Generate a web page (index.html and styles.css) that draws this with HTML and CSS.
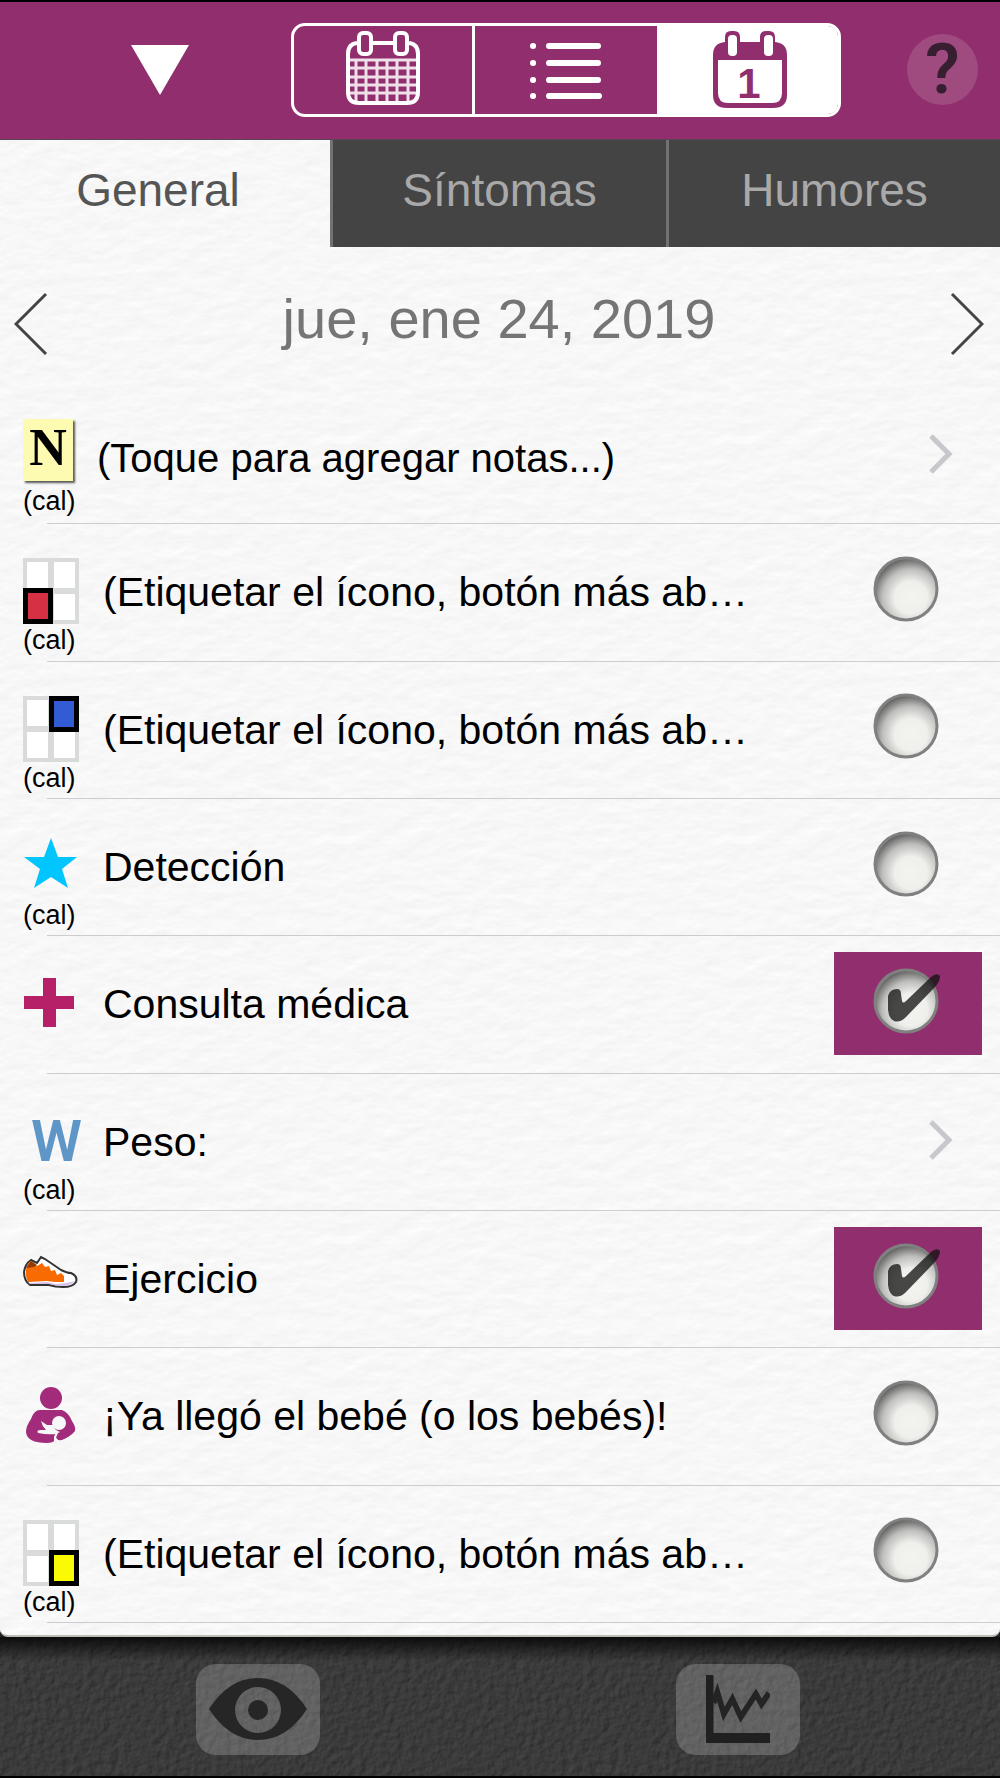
FILE: index.html
```html
<!DOCTYPE html>
<html lang="es">
<head>
<meta charset="utf-8">
<meta name="viewport" content="width=device-width, initial-scale=1">
<title>jue, ene 24, 2019</title>
<link rel="stylesheet" href="styles.css">
</head>
<body>
<header class="topbar">
  <button class="topbar-menu" type="button" aria-label="Menú">
    <svg width="58" height="50" viewBox="0 0 58 50"><path d="M0 0H58L29 50Z" fill="#fff"/></svg>
  </button>
  <div class="segments">
    <button class="segment segment-first" type="button" aria-label="Mes">
      <svg width="76" height="78" viewBox="0 0 76 78" fill="none" stroke="#fff">
        <path d="M12 12Q3 13 3 23V61Q3 72 14 72H62Q73 72 73 61V23Q73 13 64 12M27 12H49" stroke-width="4"/>
        <rect x="14" y="2" width="12" height="21" rx="4" stroke-width="4"/>
        <rect x="50" y="2" width="12" height="21" rx="4" stroke-width="4"/>
        <path d="M4 29H72M4 37H72M4 46H72M4 54H72M4 62H72M11 29V70M21 29V71M32 29V71M42 29V71M52 29V71M63 29V71" stroke-width="3" stroke-opacity=".85"/>
      </svg>
    </button>
    <button class="segment" type="button" aria-label="Lista">
      <svg width="74" height="78" viewBox="0 0 74 78" fill="none" stroke="#fff" stroke-width="6" stroke-linecap="round">
        <path d="M4 15H4.1M4 32H4.1M4 49H4.1M4 65H4.1M20 15H69M20 32H69M20 49H69M20 65H70"/>
      </svg>
    </button>
    <button class="segment segment-on" type="button" aria-label="Día" aria-pressed="true">
      <svg width="76" height="78" viewBox="0 0 76 78">
        <path d="M1 24Q1 12 13 11V6Q13 0 19 0H22Q28 0 28 6V11H48V6Q48 0 54 0H57Q63 0 63 6V11Q75 12 75 24V64Q75 77 61 77H15Q1 77 1 64Z" fill="#912f6e"/>
        <path d="M6 29H70V62Q70 72 60 72H16Q6 72 6 62Z" fill="#fff"/>
        <rect x="16" y="4" width="9" height="21" rx="4" fill="#fff"/>
        <rect x="52" y="4" width="9" height="21" rx="4" fill="#fff"/>
        <text x="37" y="67" text-anchor="middle" class="day-number">1</text>
      </svg>
    </button>
  </div>
  <button class="help" type="button">?</button>
</header>

<main class="paper">
  <nav class="tabs">
    <button class="tab tab-on" type="button">General</button>
    <button class="tab" type="button">Síntomas</button>
    <button class="tab" type="button">Humores</button>
  </nav>

  <div class="date">
    <button class="date-arrow" type="button" aria-label="Día anterior">
      <svg width="34" height="64" viewBox="0 0 34 64"><path d="M32 2L2 32L32 62" fill="none" stroke="#444" stroke-width="3"/></svg>
    </button>
    <h1 class="date-text">jue, ene 24, 2019</h1>
    <button class="date-arrow" type="button" aria-label="Día siguiente">
      <svg width="34" height="64" viewBox="0 0 34 64"><path d="M2 2L32 32L2 62" fill="none" stroke="#444" stroke-width="3"/></svg>
    </button>
  </div>

  <ul class="rows">
    <li class="row row-note">
      <div class="mark"><span class="icon"><span class="note">N</span></span><span class="cal">(cal)</span></div>
      <a class="row-text" href="#notas">(Toque para agregar notas...)</a>
      <svg class="chevron" width="26" height="42" viewBox="0 0 26 42"><path d="M3 3L21 21L3 39" fill="none" stroke="#c7c7cc" stroke-width="5"/></svg>
    </li>
    <li class="row">
      <div class="mark">
        <svg class="icon" viewBox="0 0 56 66"><rect width="56" height="66" fill="#d9dbda"/><path d="M4 4H25V30H4ZM31 4H52V30H31ZM31 36H52V62H31Z" fill="#fff"/><rect y="30" width="30" height="36"/><rect x="5" y="35" width="20" height="26" fill="#d53043"/></svg>
        <span class="cal">(cal)</span>
      </div>
      <label class="row-text" for="c1">(Etiquetar el ícono, botón más ab…</label>
      <input class="check" type="checkbox" id="c1">
    </li>
    <li class="row">
      <div class="mark">
        <svg class="icon" viewBox="0 0 56 66"><rect width="56" height="66" fill="#d9dbda"/><path d="M4 4H25V30H4ZM4 36H25V62H4ZM31 36H52V62H31Z" fill="#fff"/><rect x="26" width="30" height="36"/><rect x="31" y="5" width="20" height="26" fill="#335bd3"/></svg>
        <span class="cal">(cal)</span>
      </div>
      <label class="row-text" for="c2">(Etiquetar el ícono, botón más ab…</label>
      <input class="check" type="checkbox" id="c2">
    </li>
    <li class="row">
      <div class="mark">
        <svg class="icon" viewBox="0 0 56 66"><path d="M28 5L35 24H54L39 36L45 55L28 44L11 55L17 36L1 24H21Z" fill="#00c5ff"/></svg>
        <span class="cal">(cal)</span>
      </div>
      <label class="row-text" for="c3">Detección</label>
      <input class="check" type="checkbox" id="c3">
    </li>
    <li class="row">
      <div class="mark">
        <svg class="icon" viewBox="0 0 56 66"><path d="M20 8H33V26H51V39H33V57H20V39H1V26H20Z" fill="#b52069"/></svg>
      </div>
      <label class="row-text" for="c4">Consulta médica</label>
      <input class="check" type="checkbox" id="c4" checked>
    </li>
    <li class="row">
      <div class="mark"><span class="icon"><span class="weight">W</span></span><span class="cal">(cal)</span></div>
      <a class="row-text" href="#peso">Peso:</a>
      <svg class="chevron" width="26" height="42" viewBox="0 0 26 42"><path d="M3 3L21 21L3 39" fill="none" stroke="#c7c7cc" stroke-width="5"/></svg>
    </li>
    <li class="row">
      <div class="mark">
        <svg class="icon" viewBox="0 0 56 66">
          <path d="M1 27Q2 19 8 15L14 18L18 12L22 14L38 25Q44 28 48 28Q55 31 53 37Q50 42 40 42Q32 42 26 40L7 40Q1 36 1 27Z" fill="#fff" stroke="#333" stroke-width="2"/>
          <path d="M3 25Q4 18 8 16L14 21L19 18L22 22L26 21L28 26L32 25L34 30L38 28L41 31V37H32L24 36L5 37Q2 31 3 25Z" fill="#f76b00"/>
          <path d="M5 38L24 37L33 39L43 38L52 36Q49 40 41 41Q33 41 26 39L8 39Z" fill="#d5c2e8"/>
          <path d="M3 23L8 16L14 20L11 22Z" fill="#913b08"/>
        </svg>
      </div>
      <label class="row-text" for="c6">Ejercicio</label>
      <input class="check" type="checkbox" id="c6" checked>
    </li>
    <li class="row">
      <div class="mark">
        <svg class="icon" viewBox="0 0 56 66">
          <circle cx="28" cy="16" r="11" fill="#a22c7b"/>
          <path d="M17 28H39Q46 31 49 39Q53 45 52 49Q47 55 39 58Q33 59 33 54Q34 61 24 61Q4 61 3 50Q3 44 8 37Q11 28 17 28Z" fill="#a22c7b"/>
          <circle cx="36" cy="41" r="7" fill="#f7f7f7"/>
          <path d="M18 39L24 43H30Q31 48 37 50L33 52Q25 53 15 51Q13 48 18 48L23 48Q19 44 18 39Z" fill="#f7f7f7"/>
          <path d="M34 51L32 55V59" fill="none" stroke="#f7f7f7" stroke-width="2"/>
        </svg>
      </div>
      <label class="row-text" for="c7">¡Ya llegó el bebé (o los bebés)!</label>
      <input class="check" type="checkbox" id="c7">
    </li>
    <li class="row">
      <div class="mark">
        <svg class="icon" viewBox="0 0 56 66"><rect width="56" height="66" fill="#d9dbda"/><path d="M4 4H25V30H4ZM31 4H52V30H31ZM4 36H25V62H4Z" fill="#fff"/><rect x="26" y="30" width="30" height="36"/><rect x="31" y="35" width="20" height="26" fill="#fafa05"/></svg>
        <span class="cal">(cal)</span>
      </div>
      <label class="row-text" for="c8">(Etiquetar el ícono, botón más ab…</label>
      <input class="check" type="checkbox" id="c8">
    </li>
  </ul>
</main>

<footer class="toolbar">
  <button class="tool" type="button" aria-label="Ver">
    <svg width="98" height="62" viewBox="0 0 98 62">
      <path fill-rule="evenodd" d="M0 31Q20 0 49 0Q78 0 98 31Q78 62 49 62Q20 62 0 31ZM49 9A23 23 0 1 0 49 55A23 23 0 1 0 49 9Z" fill="#262626"/>
      <circle cx="49" cy="32" r="10" fill="#262626"/>
    </svg>
  </button>
  <button class="tool" type="button" aria-label="Gráfica">
    <svg width="64" height="68" viewBox="0 0 68 68" preserveAspectRatio="none">
      <path d="M0 0H8V58H68V68H0Z" fill="#202020"/>
      <path d="M8 28L12 17L19 39L28 24L37 42L53 19L59 29L67 18" fill="none" stroke="#242424" stroke-width="6"/>
    </svg>
  </button>
</footer>
</body>
</html>
```

FILE: styles.css
```css
* {
  box-sizing: border-box;
}

body {
  margin: 0;
  min-height: 100vh;
  display: flex;
  flex-direction: column;
  font-family: "Liberation Sans", Arial, sans-serif;
  background: #222;
  border-top: 2px solid #000;
  border-bottom: 2px solid #000;
}

button {
  margin: 0;
  padding: 0;
  border: 0;
  background: none;
  font-family: inherit;
  display: flex;
  align-items: center;
  justify-content: center;
}

svg {
  display: block;
}

/* top bar */
.topbar {
  height: 138px;
  padding-bottom: 2px;
  display: grid;
  grid-template-columns: 291px 1fr 159px;
  align-items: center;
  background: #912f6e;
  border-bottom: 1px solid #5c4455;
}

.topbar-menu {
  justify-self: end;
  margin-right: 102px;
}

.segments {
  height: 94px;
  display: grid;
  grid-template-columns: repeat(3, 1fr);
  border: 3px solid #fff;
  border-radius: 14px;
}

.segment-first {
  border-right: 3px solid #fff;
}

.segment-on {
  padding-left: 6px;
  background: #fff;
  border-radius: 0 10px 10px 0;
}

.day-number {
  font-size: 42px;
  font-weight: 700;
  fill: #912f6e;
}

.help {
  width: 71px;
  height: 71px;
  justify-self: end;
  margin-right: 22px;
  border-radius: 50%;
  background: #9f4b80;
  color: #371f31;
  font-family: Roboto, sans-serif;
  font-size: 70px;
  font-weight: 600;
  line-height: 71px;
}

/* paper sheet */
.paper {
  flex: 1;
  display: flex;
  flex-direction: column;
  padding-bottom: 12px;
  border-bottom: 2px solid #bdbdb8;
  border-radius: 0 0 8px 8px;
  background: #f7f7f7 url("data:image/svg+xml,%3Csvg xmlns='http://www.w3.org/2000/svg' width='400' height='400'%3E%3Cfilter id='p' x='0' y='0' width='100%25' height='100%25' color-interpolation-filters='sRGB'%3E%3CfeTurbulence type='fractalNoise' baseFrequency='.04 .07' numOctaves='3' seed='4' stitchTiles='stitch'/%3E%3CfeDiffuseLighting surfaceScale='.2' diffuseConstant='1.12' lighting-color='white'%3E%3CfeDistantLight azimuth='250' elevation='60'/%3E%3C/feDiffuseLighting%3E%3C/filter%3E%3Crect width='400' height='400' filter='url(%23p)'/%3E%3C/svg%3E");
}

.tabs {
  height: 107px;
  display: grid;
  grid-template-columns: 330fr 336fr 334fr;
}

.tab {
  padding-bottom: 8px;
  border-left: 3px solid #6f7375;
  background: #444;
  color: #a9a9a9;
  font-size: 46px;
}

.tab-on {
  padding-right: 14px;
  border-left: 0;
  background: none;
  color: #555;
}

.date {
  height: 140px;
  padding: 14px 16px 0 14px;
  display: flex;
  align-items: center;
  justify-content: space-between;
}

.date-text {
  margin: 0;
  padding-bottom: 12px;
  color: #757575;
  font-size: 56px;
  font-weight: 400;
}

/* list */
.rows {
  flex: 1;
  margin: 0;
  padding: 0;
  list-style: none;
  display: grid;
  grid-auto-rows: 1fr;
}

.row {
  display: flex;
  align-items: center;
  gap: 24px;
  padding: 0 18px 0 23px;
  background: linear-gradient(#cdcdd0, #cdcdd0) 47px 100% / 100% 1px no-repeat;
}

.row-note {
  gap: 18px;
}

.mark {
  width: 56px;
  align-self: stretch;
  padding-top: 34px;
}

.icon {
  display: block;
  width: 56px;
  height: 66px;
}

.cal {
  display: block;
  padding-top: 2px;
  font-size: 27px;
  line-height: 28px;
}

.note {
  display: block;
  width: 50px;
  height: 62px;
  background: #fdfab2;
  box-shadow: 2px 2px 2px #555;
  font-family: "Liberation Serif", serif;
  font-size: 52px;
  font-weight: 700;
  line-height: 58px;
  text-align: center;
}

.weight {
  display: block;
  padding-left: 8px;
  color: #5e97c7;
  font-family: Roboto, sans-serif;
  font-size: 58px;
  font-weight: 600;
  line-height: 66px;
}

.row-text {
  flex: 1;
  color: #000;
  font-size: 41px;
  text-decoration: none;
  white-space: nowrap;
}

.row-note .row-text {
  padding-top: 6px;
  font-size: 40px;
}

.row-note .mark {
  padding-top: 32px;
}

.chevron {
  margin: 0 28px 4px 0;
}

.check {
  appearance: none;
  flex: none;
  width: 148px;
  height: 103px;
  margin: 0 0 3px;
  background: url("data:image/svg+xml,%3Csvg xmlns='http://www.w3.org/2000/svg' width='66' height='66'%3E%3CradialGradient id='g' cx='.58' cy='.64' r='.66'%3E%3Cstop offset='0' stop-color='%23f3f3f0'/%3E%3Cstop offset='.4' stop-color='%23efefec'/%3E%3Cstop offset='.7' stop-color='%23bdbdbb'/%3E%3Cstop offset='1' stop-color='%23555'/%3E%3C/radialGradient%3E%3Ccircle cx='33' cy='33' r='31' fill='url(%23g)' stroke='%23808080' stroke-width='3'/%3E%3C/svg%3E") 39px 16px no-repeat;
}

.check:checked {
  background-color: #912f6e;
  background-image: url("data:image/svg+xml,%3Csvg xmlns='http://www.w3.org/2000/svg' width='68' height='66'%3E%3CradialGradient id='g' cx='.58' cy='.64' r='.66'%3E%3Cstop offset='0' stop-color='%23f3f3f0'/%3E%3Cstop offset='.4' stop-color='%23efefec'/%3E%3Cstop offset='.7' stop-color='%23bdbdbb'/%3E%3Cstop offset='1' stop-color='%23555'/%3E%3C/radialGradient%3E%3Ccircle cx='33' cy='33' r='31' fill='url(%23g)' stroke='%23808080' stroke-width='3'/%3E%3Cpath d='M15 28Q17 21 24 21Q28 21 28 26L29 33Q30 36 33 33L58 9Q64 4 67 8Q67 14 61 20L33 49Q27 55 21 53Q16 51 15 42Z' fill='%23111' fill-opacity='.76'/%3E%3C/svg%3E");
}

/* bottom bar */
.toolbar {
  height: 139px;
  padding: 5px 22px 0 18px;
  display: flex;
  align-items: center;
  justify-content: space-around;
  background:
    linear-gradient(rgba(0, 0, 0, .8), rgba(0, 0, 0, 0) 24px),
    url("data:image/svg+xml,%3Csvg xmlns='http://www.w3.org/2000/svg' width='500' height='140'%3E%3Cfilter id='l' x='0' y='0' width='100%25' height='100%25' color-interpolation-filters='sRGB'%3E%3CfeTurbulence type='fractalNoise' baseFrequency='.14 .14' numOctaves='3' seed='9' stitchTiles='stitch'/%3E%3CfeDiffuseLighting surfaceScale='1' diffuseConstant='1' lighting-color='%23484848'%3E%3CfeDistantLight azimuth='220' elevation='55'/%3E%3C/feDiffuseLighting%3E%3C/filter%3E%3Crect width='500' height='140' filter='url(%23l)'/%3E%3C/svg%3E");
}

.tool {
  width: 124px;
  height: 91px;
  border-radius: 20px;
  background: rgba(255, 255, 255, .2);
}
```
